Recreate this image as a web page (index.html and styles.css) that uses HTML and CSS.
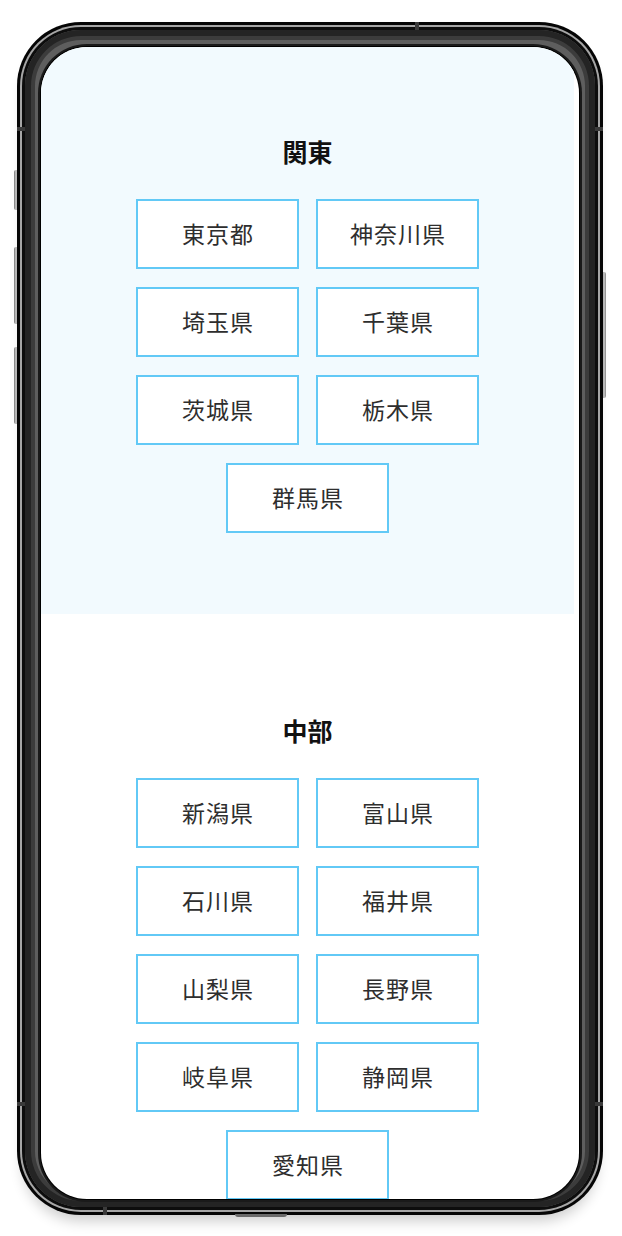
FILE: index.html
```html
<!DOCTYPE html>
<html lang="ja">
<head>
<meta charset="utf-8">
<title>地域一覧</title>
<link rel="stylesheet" href="styles.css">
</head>
<body>
<div class="stage">
  <div class="btn btn-left btn-1"></div>
  <div class="btn btn-left btn-2"></div>
  <div class="btn btn-left btn-3"></div>
  <div class="btn btn-right"></div>
  <div class="phone">
    <div class="band band-top"></div>
    <div class="band band-left"></div>
    <div class="band band-right"></div>
    <div class="band band-bottom"></div>
    <div class="band band-left-low"></div>
    <div class="band band-right-low"></div>
    <div class="rim">
      <div class="frame">
        <div class="bezel">
          <div class="screen">
            <div class="content">
              <section class="region region-tint">
                <h2 class="region-title">関東</h2>
                <ul class="pref-list">
                  <li class="pref">東京都</li>
                  <li class="pref">神奈川県</li>
                  <li class="pref">埼玉県</li>
                  <li class="pref">千葉県</li>
                  <li class="pref">茨城県</li>
                  <li class="pref">栃木県</li>
                  <li class="pref">群馬県</li>
                </ul>
              </section>
              <section class="region">
                <h2 class="region-title">中部</h2>
                <ul class="pref-list">
                  <li class="pref">新潟県</li>
                  <li class="pref">富山県</li>
                  <li class="pref">石川県</li>
                  <li class="pref">福井県</li>
                  <li class="pref">山梨県</li>
                  <li class="pref">長野県</li>
                  <li class="pref">岐阜県</li>
                  <li class="pref">静岡県</li>
                  <li class="pref">愛知県</li>
                </ul>
              </section>
            </div>
          </div>
        </div>
      </div>
    </div>
    <div class="speaker"></div>
  </div>
</div>
</body>
</html>
```

FILE: styles.css
```css
* { box-sizing: border-box; }

html, body {
  margin: 0;
  padding: 0;
  background: #ffffff;
}

body {
  font-family: "Noto Sans CJK JP", "Noto Sans", sans-serif;
  color: #333333;
}

.stage {
  position: relative;
  width: 622px;
  height: 1236px;
  padding: 22px 0 0 17px;
}

.phone {
  position: relative;
  width: 586px;
  height: 1193px;
  border-radius: 64px;
  background: #050505;
  padding: 3px;
  display: flex;
  box-shadow: 0 12px 14px -6px rgba(0, 0, 0, 0.2);
}

.rim {
  flex: 1;
  display: flex;
  border-radius: 61px;
  background: #a6a6a6;
  padding: 2px;
}

.frame {
  flex: 1;
  display: flex;
  border-radius: 59px;
  background: #0d0d0d;
  padding: 3px;
}

.bezel {
  flex: 1;
  display: flex;
  border-radius: 56px;
  background: #5e5e5e;
  box-shadow: inset 0 0 0 6px #242424, inset 0 0 0 10px #3c3c3c;
  padding: 17px 16px 8px 16px;
}

.screen {
  flex: 1;
  border-radius: 46px;
  overflow: hidden;
  background: #ffffff;
  box-shadow: 0 0 0 1px #000, 0 0 0 3px #1a1a1a;
}

.content {
  margin-top: -12px;
  padding-right: 5px;
}

.region {
  padding: 99px 0 81px;
  display: flex;
  flex-direction: column;
  align-items: center;
}

.region-tint {
  background: #f2fafe;
}

.region-title {
  margin: 0 0 31px;
  font-size: 25px;
  line-height: 34px;
  font-weight: 700;
  color: #111111;
}

.pref-list {
  list-style: none;
  margin: 0;
  padding: 0;
  width: 343px;
  display: flex;
  flex-wrap: wrap;
  justify-content: center;
  column-gap: 17px;
  row-gap: 18px;
}

.pref {
  width: 163px;
  height: 70px;
  border: 2px solid #62c9f6;
  background: #ffffff;
  display: flex;
  align-items: center;
  justify-content: center;
  font-size: 23px;
  letter-spacing: 1px;
  padding: 0 0 2px 1px;
  color: #2e2e2e;
}

.btn {
  position: absolute;
  width: 4px;
  background: linear-gradient(90deg, #777, #d0d0d0 50%, #888);
  border-radius: 2px 0 0 2px;
}
.btn-left { left: 14px; }
.btn-1 { top: 170px; height: 40px; }
.btn-2 { top: 247px; height: 77px; }
.btn-3 { top: 347px; height: 77px; }
.btn-right {
  left: 602px;
  top: 272px;
  height: 126px;
  border-radius: 0 2px 2px 0;
}

.band {
  position: absolute;
  background: #3a3a3a;
  z-index: 2;
}
.band-top { left: 398px; top: 0; width: 4px; height: 8px; }
.band-left { left: 0; top: 105px; width: 8px; height: 4px; }
.band-right { right: 0; top: 105px; width: 8px; height: 4px; }
.band-left-low { left: 0; top: 1080px; width: 8px; height: 4px; }
.band-right-low { right: 0; top: 1080px; width: 8px; height: 4px; }
.band-bottom { left: 86px; bottom: 0; width: 4px; height: 8px; }

.speaker {
  position: absolute;
  left: 218px;
  bottom: -2px;
  width: 52px;
  height: 3px;
  border-radius: 0 0 3px 3px;
  background: #6a6a6a;
}
```
